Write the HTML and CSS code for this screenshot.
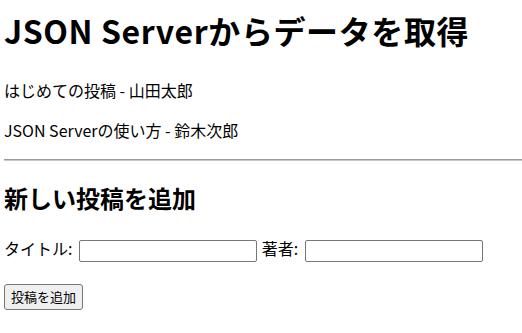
FILE: index.html
```html
<!DOCTYPE html>
<html lang="ja">
<head>
    <meta charset="UTF-8">
    <title>JSON Serverからデータを取得</title>
    <link rel="stylesheet" href="styles.css">
</head>
<body>

<h1>JSON Serverからデータを取得</h1>

<div id="posts">
    <p>はじめての投稿 - 山田太郎</p>
    <p>JSON Serverの使い方 - 鈴木次郎</p>
</div>

<hr>

<h2>新しい投稿を追加</h2>
<form id="postForm">
    <p class="row">
        <label for="title">タイトル:</label>
        <input type="text" id="title" class="field">
        <label for="author">著者:</label>
        <input type="text" id="author" class="field">
    </p>
    <button type="submit" class="btn">投稿を追加</button>
</form>

</body>
</html>
```

FILE: styles.css
```css
body {
    font-family: "Noto Sans CJK JP", "Noto Sans", sans-serif;
    font-size: 16px;
    line-height: 1.5;
    color: #000;
    background: #fff;
    margin: 0 0 8px 4px;
}
h1 {
    font-size: 32px;
    line-height: 48px;
    letter-spacing: 0.6px;
    margin: 6px 0 24px;
}
p {
    margin: 16px 0;
}
hr {
    margin: 17px 0 8px;
    border: 0;
    border-top: 1px solid #9a9a9a;
    border-bottom: 1px solid #c8c8c8;
}
h2 {
    font-size: 24px;
    line-height: 36px;
    margin: 19px 0 20px;
}
.row {
    margin: 16px 0 21px;
}
.field {
    width: 172px;
    height: 18px;
    font-size: 13px;
    padding: 1px 2px;
    margin: 0 1px 0 3px;
    border: 1px solid #767676;
    border-radius: 2px;
    vertical-align: middle;
}
.btn {
    font-family: inherit;
    font-size: 13px;
    line-height: 22px;
    padding: 1px 6px;
    background: #efefef;
    border: 1px solid #767676;
    border-radius: 3px;
}
```
